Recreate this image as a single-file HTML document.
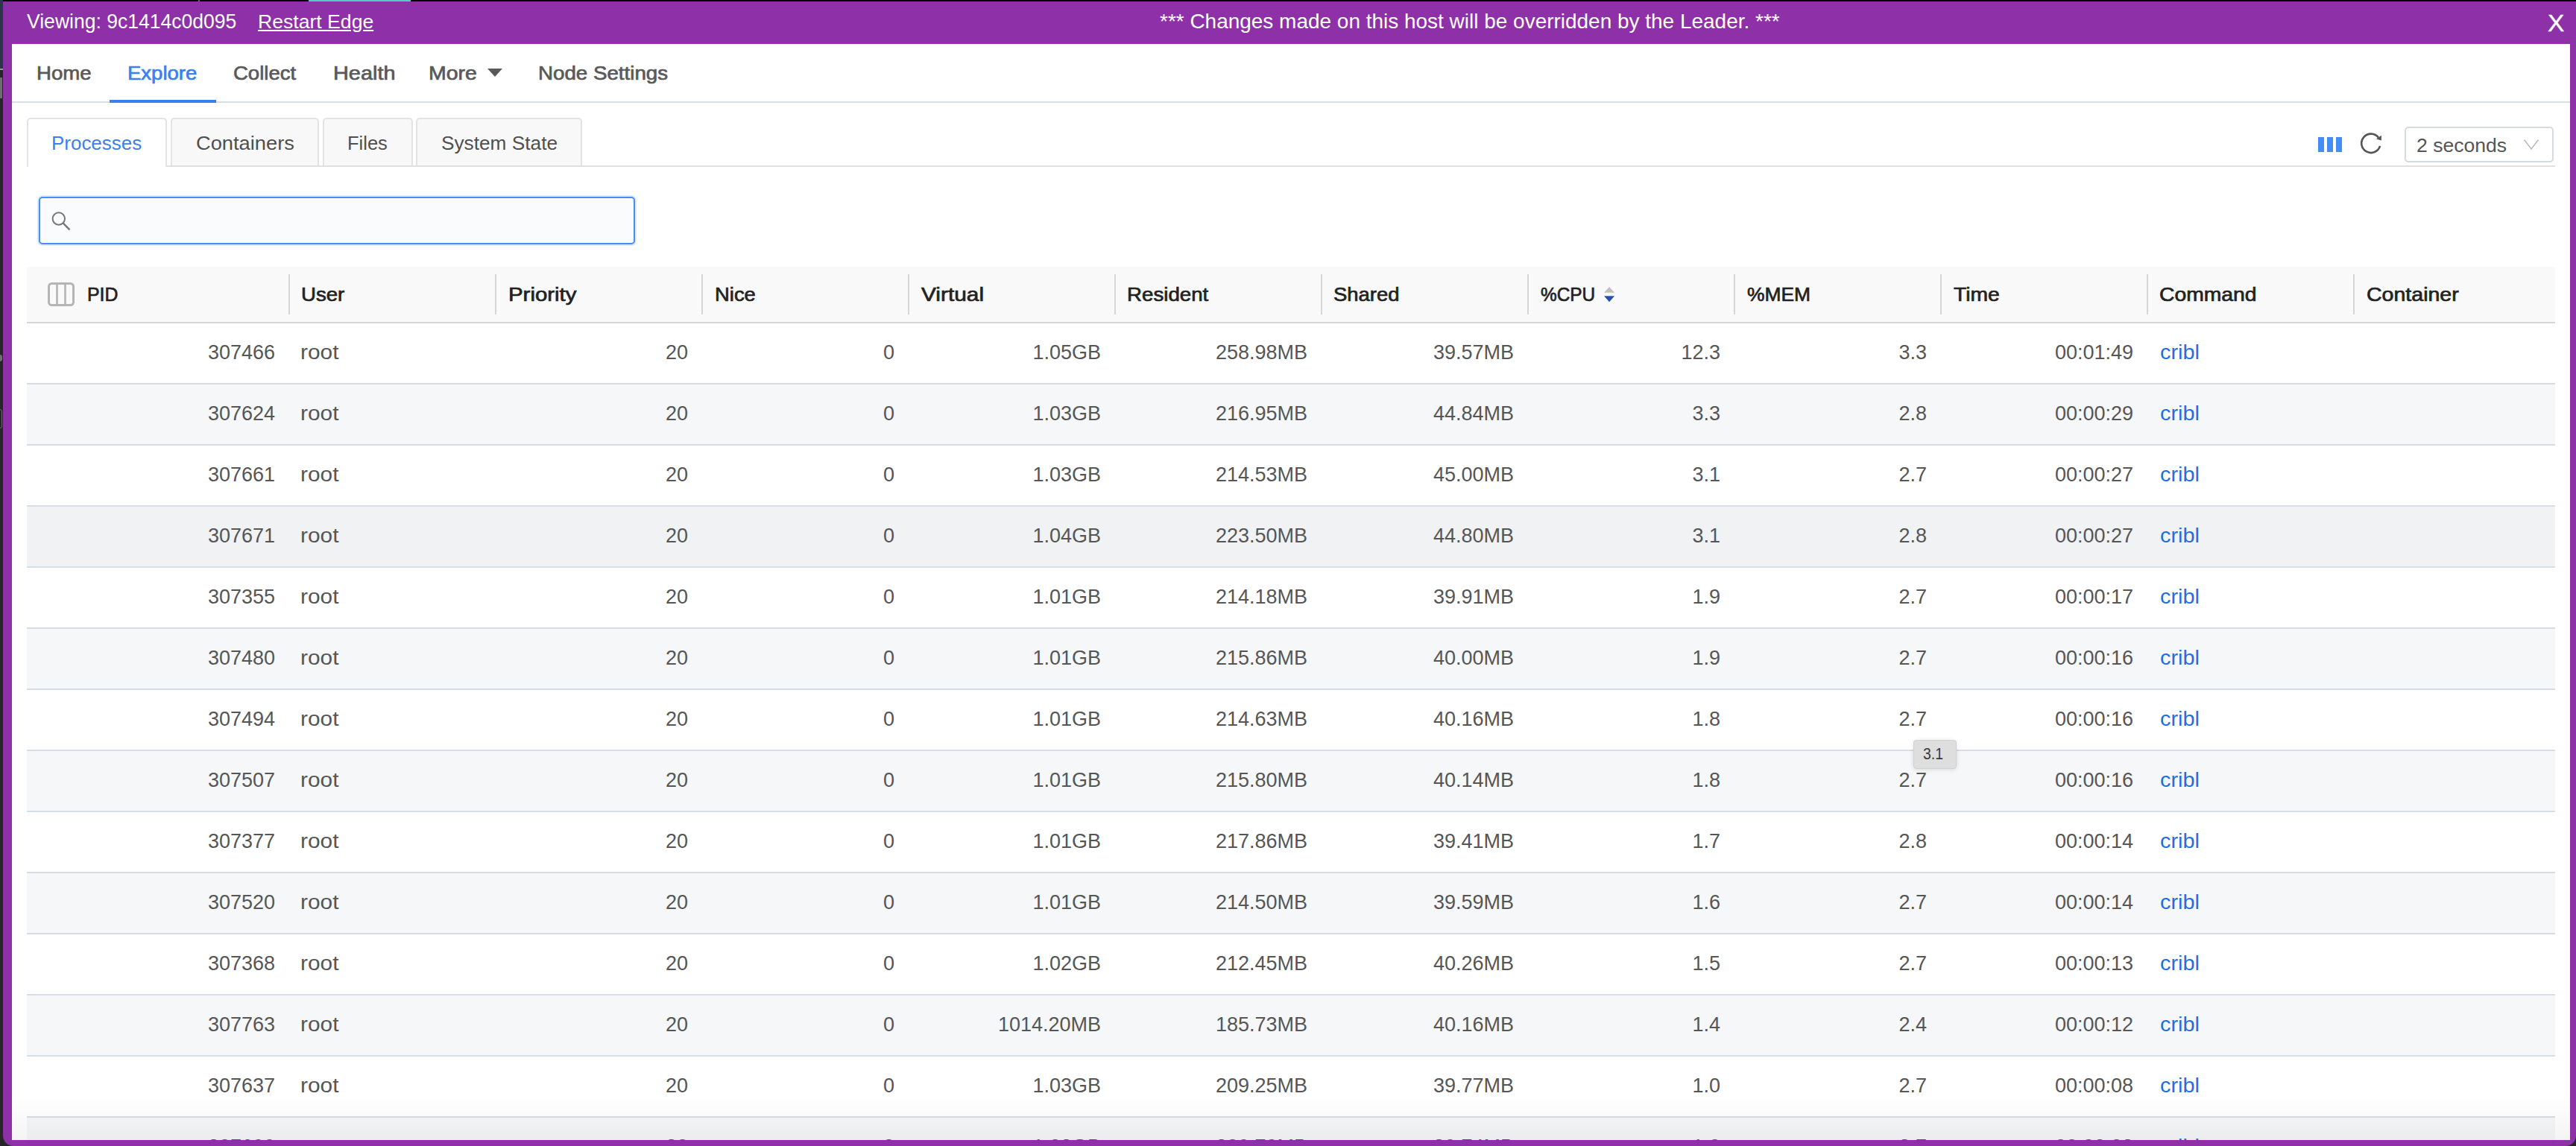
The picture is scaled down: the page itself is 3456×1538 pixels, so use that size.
<!DOCTYPE html><html><head><meta charset="utf-8"><style>
*{box-sizing:border-box;margin:0;padding:0}
html,body{width:3456px;height:1538px;overflow:hidden;background:#262626;font-family:"Liberation Sans",sans-serif}
div,span{position:absolute}
.t{white-space:pre;line-height:1;transform-origin:0 0}
.bt{color:#fff}
.nav{color:#595959}
.tab{border:2px solid #e3e3e3;border-bottom:none;border-radius:5px 5px 0 0;background:#f8f8f8}
.tabt{color:#4f4f4f}
.th{color:#222}
.sep{width:2px;height:54px;background:#d6d6d6}
.row{width:3392px;height:82px;border-bottom:2px solid #d5dee6}
.c{color:#565656;font-size:27px}
.r{text-align:right}
.lk{color:#1f6fdc}
</style></head><body>
<div style="left:0;top:0;width:3456px;height:2px;background:#000"></div>
<div style="left:414px;top:0;width:137px;height:2px;background:#5bc8c8"></div>
<div style="left:266px;top:0;width:2px;height:2px;background:#666"></div>
<div style="left:0;top:0;width:4px;height:92px;background:#293548"></div>
<div style="left:0;top:92px;width:4px;height:2px;background:#999"></div>
<div style="left:0;top:104px;width:3px;height:28px;background:#6e6e6e"></div>
<div style="left:0;top:476px;width:3px;height:9px;background:#707070;border-radius:0 5px 5px 0"></div>
<div style="left:-3px;top:549px;width:6px;height:26px;border:1.5px solid #6a6a6a;border-radius:3px"></div>
<div style="left:4px;top:2px;width:3452px;height:1536px;background:#8e30a8;border-bottom-left-radius:14px;border-bottom-right-radius:14px"></div>
<span class="t bt" style="font-size:27px;left:35.90px;top:16.44px;transform:scaleX(0.9829);">Viewing: 9c1414c0d095</span>
<span class="t bt" style="font-size:26px;left:345.95px;top:15.99px;transform:scaleX(1.0228);text-decoration:underline">Restart Edge</span>
<span class="t bt" style="font-size:28px;left:1556.30px;top:14.80px;transform:scaleX(0.9987);">*** Changes made on this host will be overridden by the Leader. ***</span>
<span class="t bt" style="font-size:31px;left:3418px;top:15.8px;transform:scaleX(1.08);-webkit-text-stroke:0.4px #fff">X</span>
<div style="left:16px;top:59px;width:3432px;height:1471px;background:#fff;overflow:hidden">
<div style="left:0;top:77px;width:3432px;height:2px;background:#d6dee4"></div>
<div style="left:131px;top:75px;width:143px;height:4px;background:#3a80f0"></div>
<span class="t nav" style="font-size:26px;-webkit-text-stroke:0.7px currentColor;left:32.74px;top:25.99px;transform:scaleX(1.0618);">Home</span>
<span class="t nav" style="font-size:26px;-webkit-text-stroke:0.7px currentColor;left:155.34px;top:25.99px;transform:scaleX(1.0575);color:#3a80f0">Explore</span>
<span class="t nav" style="font-size:26px;-webkit-text-stroke:0.7px currentColor;left:297.34px;top:25.99px;transform:scaleX(1.0582);">Collect</span>
<span class="t nav" style="font-size:26px;-webkit-text-stroke:0.7px currentColor;left:430.79px;top:25.99px;transform:scaleX(1.1110);">Health</span>
<span class="t nav" style="font-size:26px;-webkit-text-stroke:0.7px currentColor;left:558.50px;top:25.99px;transform:scaleX(1.0966);">More</span>
<span class="t nav" style="font-size:26px;-webkit-text-stroke:0.7px currentColor;left:706.43px;top:25.99px;transform:scaleX(1.0660);">Node Settings</span>
<div style="left:638px;top:33px;width:0;height:0;border-left:10px solid transparent;border-right:10px solid transparent;border-top:11px solid #595959"></div>
<div style="left:20px;top:163px;width:3392px;height:2px;background:#e0e0e0"></div>
<div class="tab" style="left:20px;top:99px;width:188px;height:66px;background:#fff"></div>
<span class="t " style="font-size:26px;left:53.20px;top:119.89px;transform:scaleX(0.9983);color:#3a80f0">Processes</span>
<div class="tab" style="left:213px;top:99px;width:199px;height:64px"></div>
<span class="t tabt" style="font-size:26px;left:246.75px;top:119.89px;transform:scaleX(1.0492);">Containers</span>
<div class="tab" style="left:417px;top:99px;width:121px;height:64px"></div>
<span class="t tabt" style="font-size:26px;left:450.34px;top:119.89px;transform:scaleX(0.9808);">Files</span>
<div class="tab" style="left:542px;top:99px;width:223px;height:64px"></div>
<span class="t tabt" style="font-size:26px;left:575.99px;top:119.89px;transform:scaleX(1.0092);">System State</span>
<div style="left:3094px;top:125px;width:8px;height:20px;background:#448df4"></div>
<div style="left:3106px;top:125px;width:8px;height:20px;background:#448df4"></div>
<div style="left:3118px;top:125px;width:8px;height:20px;background:#448df4"></div>
<svg style="position:absolute;left:3144px;top:111px" width="50" height="45" viewBox="0 0 50 45"><path d="M33.08 25.92A12.7 12.7 0 1 1 31.0 14.6" stroke="#555" stroke-width="2.6" fill="none"/><path d="M34.9 11.8L34.9 18.4L28.0 16.6Z" fill="#555"/></svg>
<div style="left:3210px;top:111px;width:200px;height:48px;border:2px solid #d3dbe1;border-radius:5px;background:#fff"></div>
<span class="t " style="font-size:26px;left:3225.58px;top:122.99px;transform:scaleX(1.0222);color:#555">2 seconds</span>
<svg style="position:absolute;left:3369px;top:127px" width="22" height="16" viewBox="0 0 22 16"><path d="M1.5 1.5L11 14L20.5 1.5" stroke="#bbb" stroke-width="1.6" fill="none"/></svg>
<div style="left:34px;top:203px;width:804px;height:68px;border-radius:7px;background:#dde8fb"></div>
<div style="left:36px;top:205px;width:800px;height:64px;border:2px solid #4390f2;border-radius:5px;background:#fafbfc"></div>
<svg style="position:absolute;left:50px;top:221.5px" width="32" height="32" viewBox="0 0 32 32"><circle cx="12.8" cy="12.5" r="8.2" stroke="#777" stroke-width="2" fill="none"/><path d="M18.6 18.4L27.5 27.3" stroke="#777" stroke-width="2.4"/></svg>
<div style="left:20px;top:299px;width:3392px;height:76px;background:#f9f9f9;border-bottom:2px solid #d5d5d5"></div>
<span class="t th" style="font-size:26px;-webkit-text-stroke:0.7px currentColor;left:100.75px;top:323.19px;transform:scaleX(0.9548);">PID</span>
<div class="sep" style="left:371px;top:309px"></div>
<span class="t th" style="font-size:26px;-webkit-text-stroke:0.7px currentColor;left:388.14px;top:323.19px;transform:scaleX(1.0611);">User</span>
<div class="sep" style="left:648px;top:309px"></div>
<span class="t th" style="font-size:26px;-webkit-text-stroke:0.7px currentColor;left:665.67px;top:323.19px;transform:scaleX(1.1309);">Priority</span>
<div class="sep" style="left:925px;top:309px"></div>
<span class="t th" style="font-size:26px;-webkit-text-stroke:0.7px currentColor;left:942.55px;top:323.19px;transform:scaleX(1.0549);">Nice</span>
<div class="sep" style="left:1202px;top:309px"></div>
<span class="t th" style="font-size:26px;-webkit-text-stroke:0.7px currentColor;left:1219.70px;top:323.19px;transform:scaleX(1.1472);">Virtual</span>
<div class="sep" style="left:1479px;top:309px"></div>
<span class="t th" style="font-size:26px;-webkit-text-stroke:0.7px currentColor;left:1496.34px;top:323.19px;transform:scaleX(1.0647);">Resident</span>
<div class="sep" style="left:1756px;top:309px"></div>
<span class="t th" style="font-size:26px;-webkit-text-stroke:0.7px currentColor;left:1773.14px;top:323.19px;transform:scaleX(1.0561);">Shared</span>
<div class="sep" style="left:2033px;top:309px"></div>
<span class="t th" style="font-size:26px;-webkit-text-stroke:0.7px currentColor;left:2051.40px;top:323.19px;transform:scaleX(0.9377);">%CPU</span>
<div class="sep" style="left:2310px;top:309px"></div>
<span class="t th" style="font-size:26px;-webkit-text-stroke:0.7px currentColor;left:2328.10px;top:323.19px;transform:scaleX(1.0146);">%MEM</span>
<div class="sep" style="left:2587px;top:309px"></div>
<span class="t th" style="font-size:26px;-webkit-text-stroke:0.7px currentColor;left:2605.30px;top:323.19px;transform:scaleX(1.0875);">Time</span>
<div class="sep" style="left:2864px;top:309px"></div>
<span class="t th" style="font-size:26px;-webkit-text-stroke:0.7px currentColor;left:2881.41px;top:323.19px;transform:scaleX(1.0890);">Command</span>
<div class="sep" style="left:3141px;top:309px"></div>
<span class="t th" style="font-size:26px;-webkit-text-stroke:0.7px currentColor;left:3158.80px;top:323.19px;transform:scaleX(1.0973);">Container</span>
<svg style="position:absolute;left:47px;top:319px" width="38" height="34" viewBox="0 0 38 34"><rect x="2.5" y="2.5" width="33" height="29" rx="4" stroke="#b5b5b5" stroke-width="3" fill="none"/><path d="M13.5 3V31M24.5 3V31" stroke="#b5b5b5" stroke-width="2.6"/></svg>
<svg style="position:absolute;left:2135px;top:326px" width="16" height="21" viewBox="0 0 16 21"><path d="M1 7.7L8 0.0L15 7.7Z" fill="#c0c0c0"/><path d="M1 12.2L15 12.2L8 20.3Z" fill="#2450b4"/></svg>
<div class="row" style="left:20px;top:375px;background:#fff"></div>
<span class="t c r" style="right:3079px;top:400.7px">307466</span>
<span class="t c" style="font-size:27px;left:386.99px;top:400.74px;transform:scaleX(1.1067);">root</span>
<span class="t c r" style="right:2525px;top:400.7px">20</span>
<span class="t c r" style="right:2248px;top:400.7px">0</span>
<span class="t c r" style="right:1971px;top:400.7px">1.05GB</span>
<span class="t c r" style="right:1694px;top:400.7px">258.98MB</span>
<span class="t c r" style="right:1417px;top:400.7px">39.57MB</span>
<span class="t c r" style="right:1140px;top:400.7px">12.3</span>
<span class="t c r" style="right:863px;top:400.7px">3.3</span>
<span class="t c r" style="right:586px;top:400.7px">00:01:49</span>
<span class="t c" style="font-size:27px;left:2881.73px;top:400.74px;transform:scaleX(1.0681);color:#1f6fdc">cribl</span>
<div class="row" style="left:20px;top:457px;background:#f5f7f9"></div>
<span class="t c r" style="right:3079px;top:482.7px">307624</span>
<span class="t c" style="font-size:27px;left:386.99px;top:482.74px;transform:scaleX(1.1067);">root</span>
<span class="t c r" style="right:2525px;top:482.7px">20</span>
<span class="t c r" style="right:2248px;top:482.7px">0</span>
<span class="t c r" style="right:1971px;top:482.7px">1.03GB</span>
<span class="t c r" style="right:1694px;top:482.7px">216.95MB</span>
<span class="t c r" style="right:1417px;top:482.7px">44.84MB</span>
<span class="t c r" style="right:1140px;top:482.7px">3.3</span>
<span class="t c r" style="right:863px;top:482.7px">2.8</span>
<span class="t c r" style="right:586px;top:482.7px">00:00:29</span>
<span class="t c" style="font-size:27px;left:2881.73px;top:482.74px;transform:scaleX(1.0681);color:#1f6fdc">cribl</span>
<div class="row" style="left:20px;top:539px;background:#fff"></div>
<span class="t c r" style="right:3079px;top:564.7px">307661</span>
<span class="t c" style="font-size:27px;left:386.99px;top:564.74px;transform:scaleX(1.1067);">root</span>
<span class="t c r" style="right:2525px;top:564.7px">20</span>
<span class="t c r" style="right:2248px;top:564.7px">0</span>
<span class="t c r" style="right:1971px;top:564.7px">1.03GB</span>
<span class="t c r" style="right:1694px;top:564.7px">214.53MB</span>
<span class="t c r" style="right:1417px;top:564.7px">45.00MB</span>
<span class="t c r" style="right:1140px;top:564.7px">3.1</span>
<span class="t c r" style="right:863px;top:564.7px">2.7</span>
<span class="t c r" style="right:586px;top:564.7px">00:00:27</span>
<span class="t c" style="font-size:27px;left:2881.73px;top:564.74px;transform:scaleX(1.0681);color:#1f6fdc">cribl</span>
<div class="row" style="left:20px;top:621px;background:#f0f2f4"></div>
<span class="t c r" style="right:3079px;top:646.7px">307671</span>
<span class="t c" style="font-size:27px;left:386.99px;top:646.74px;transform:scaleX(1.1067);">root</span>
<span class="t c r" style="right:2525px;top:646.7px">20</span>
<span class="t c r" style="right:2248px;top:646.7px">0</span>
<span class="t c r" style="right:1971px;top:646.7px">1.04GB</span>
<span class="t c r" style="right:1694px;top:646.7px">223.50MB</span>
<span class="t c r" style="right:1417px;top:646.7px">44.80MB</span>
<span class="t c r" style="right:1140px;top:646.7px">3.1</span>
<span class="t c r" style="right:863px;top:646.7px">2.8</span>
<span class="t c r" style="right:586px;top:646.7px">00:00:27</span>
<span class="t c" style="font-size:27px;left:2881.73px;top:646.74px;transform:scaleX(1.0681);color:#1f6fdc">cribl</span>
<div class="row" style="left:20px;top:703px;background:#fff"></div>
<span class="t c r" style="right:3079px;top:728.7px">307355</span>
<span class="t c" style="font-size:27px;left:386.99px;top:728.74px;transform:scaleX(1.1067);">root</span>
<span class="t c r" style="right:2525px;top:728.7px">20</span>
<span class="t c r" style="right:2248px;top:728.7px">0</span>
<span class="t c r" style="right:1971px;top:728.7px">1.01GB</span>
<span class="t c r" style="right:1694px;top:728.7px">214.18MB</span>
<span class="t c r" style="right:1417px;top:728.7px">39.91MB</span>
<span class="t c r" style="right:1140px;top:728.7px">1.9</span>
<span class="t c r" style="right:863px;top:728.7px">2.7</span>
<span class="t c r" style="right:586px;top:728.7px">00:00:17</span>
<span class="t c" style="font-size:27px;left:2881.73px;top:728.74px;transform:scaleX(1.0681);color:#1f6fdc">cribl</span>
<div class="row" style="left:20px;top:785px;background:#f5f7f9"></div>
<span class="t c r" style="right:3079px;top:810.7px">307480</span>
<span class="t c" style="font-size:27px;left:386.99px;top:810.74px;transform:scaleX(1.1067);">root</span>
<span class="t c r" style="right:2525px;top:810.7px">20</span>
<span class="t c r" style="right:2248px;top:810.7px">0</span>
<span class="t c r" style="right:1971px;top:810.7px">1.01GB</span>
<span class="t c r" style="right:1694px;top:810.7px">215.86MB</span>
<span class="t c r" style="right:1417px;top:810.7px">40.00MB</span>
<span class="t c r" style="right:1140px;top:810.7px">1.9</span>
<span class="t c r" style="right:863px;top:810.7px">2.7</span>
<span class="t c r" style="right:586px;top:810.7px">00:00:16</span>
<span class="t c" style="font-size:27px;left:2881.73px;top:810.74px;transform:scaleX(1.0681);color:#1f6fdc">cribl</span>
<div class="row" style="left:20px;top:867px;background:#fff"></div>
<span class="t c r" style="right:3079px;top:892.7px">307494</span>
<span class="t c" style="font-size:27px;left:386.99px;top:892.74px;transform:scaleX(1.1067);">root</span>
<span class="t c r" style="right:2525px;top:892.7px">20</span>
<span class="t c r" style="right:2248px;top:892.7px">0</span>
<span class="t c r" style="right:1971px;top:892.7px">1.01GB</span>
<span class="t c r" style="right:1694px;top:892.7px">214.63MB</span>
<span class="t c r" style="right:1417px;top:892.7px">40.16MB</span>
<span class="t c r" style="right:1140px;top:892.7px">1.8</span>
<span class="t c r" style="right:863px;top:892.7px">2.7</span>
<span class="t c r" style="right:586px;top:892.7px">00:00:16</span>
<span class="t c" style="font-size:27px;left:2881.73px;top:892.74px;transform:scaleX(1.0681);color:#1f6fdc">cribl</span>
<div class="row" style="left:20px;top:949px;background:#f5f7f9"></div>
<span class="t c r" style="right:3079px;top:974.7px">307507</span>
<span class="t c" style="font-size:27px;left:386.99px;top:974.74px;transform:scaleX(1.1067);">root</span>
<span class="t c r" style="right:2525px;top:974.7px">20</span>
<span class="t c r" style="right:2248px;top:974.7px">0</span>
<span class="t c r" style="right:1971px;top:974.7px">1.01GB</span>
<span class="t c r" style="right:1694px;top:974.7px">215.80MB</span>
<span class="t c r" style="right:1417px;top:974.7px">40.14MB</span>
<span class="t c r" style="right:1140px;top:974.7px">1.8</span>
<span class="t c r" style="right:863px;top:974.7px">2.7</span>
<span class="t c r" style="right:586px;top:974.7px">00:00:16</span>
<span class="t c" style="font-size:27px;left:2881.73px;top:974.74px;transform:scaleX(1.0681);color:#1f6fdc">cribl</span>
<div class="row" style="left:20px;top:1031px;background:#fff"></div>
<span class="t c r" style="right:3079px;top:1056.7px">307377</span>
<span class="t c" style="font-size:27px;left:386.99px;top:1056.74px;transform:scaleX(1.1067);">root</span>
<span class="t c r" style="right:2525px;top:1056.7px">20</span>
<span class="t c r" style="right:2248px;top:1056.7px">0</span>
<span class="t c r" style="right:1971px;top:1056.7px">1.01GB</span>
<span class="t c r" style="right:1694px;top:1056.7px">217.86MB</span>
<span class="t c r" style="right:1417px;top:1056.7px">39.41MB</span>
<span class="t c r" style="right:1140px;top:1056.7px">1.7</span>
<span class="t c r" style="right:863px;top:1056.7px">2.8</span>
<span class="t c r" style="right:586px;top:1056.7px">00:00:14</span>
<span class="t c" style="font-size:27px;left:2881.73px;top:1056.74px;transform:scaleX(1.0681);color:#1f6fdc">cribl</span>
<div class="row" style="left:20px;top:1113px;background:#f5f7f9"></div>
<span class="t c r" style="right:3079px;top:1138.7px">307520</span>
<span class="t c" style="font-size:27px;left:386.99px;top:1138.74px;transform:scaleX(1.1067);">root</span>
<span class="t c r" style="right:2525px;top:1138.7px">20</span>
<span class="t c r" style="right:2248px;top:1138.7px">0</span>
<span class="t c r" style="right:1971px;top:1138.7px">1.01GB</span>
<span class="t c r" style="right:1694px;top:1138.7px">214.50MB</span>
<span class="t c r" style="right:1417px;top:1138.7px">39.59MB</span>
<span class="t c r" style="right:1140px;top:1138.7px">1.6</span>
<span class="t c r" style="right:863px;top:1138.7px">2.7</span>
<span class="t c r" style="right:586px;top:1138.7px">00:00:14</span>
<span class="t c" style="font-size:27px;left:2881.73px;top:1138.74px;transform:scaleX(1.0681);color:#1f6fdc">cribl</span>
<div class="row" style="left:20px;top:1195px;background:#fff"></div>
<span class="t c r" style="right:3079px;top:1220.7px">307368</span>
<span class="t c" style="font-size:27px;left:386.99px;top:1220.74px;transform:scaleX(1.1067);">root</span>
<span class="t c r" style="right:2525px;top:1220.7px">20</span>
<span class="t c r" style="right:2248px;top:1220.7px">0</span>
<span class="t c r" style="right:1971px;top:1220.7px">1.02GB</span>
<span class="t c r" style="right:1694px;top:1220.7px">212.45MB</span>
<span class="t c r" style="right:1417px;top:1220.7px">40.26MB</span>
<span class="t c r" style="right:1140px;top:1220.7px">1.5</span>
<span class="t c r" style="right:863px;top:1220.7px">2.7</span>
<span class="t c r" style="right:586px;top:1220.7px">00:00:13</span>
<span class="t c" style="font-size:27px;left:2881.73px;top:1220.74px;transform:scaleX(1.0681);color:#1f6fdc">cribl</span>
<div class="row" style="left:20px;top:1277px;background:#f5f7f9"></div>
<span class="t c r" style="right:3079px;top:1302.7px">307763</span>
<span class="t c" style="font-size:27px;left:386.99px;top:1302.74px;transform:scaleX(1.1067);">root</span>
<span class="t c r" style="right:2525px;top:1302.7px">20</span>
<span class="t c r" style="right:2248px;top:1302.7px">0</span>
<span class="t c r" style="right:1971px;top:1302.7px">1014.20MB</span>
<span class="t c r" style="right:1694px;top:1302.7px">185.73MB</span>
<span class="t c r" style="right:1417px;top:1302.7px">40.16MB</span>
<span class="t c r" style="right:1140px;top:1302.7px">1.4</span>
<span class="t c r" style="right:863px;top:1302.7px">2.4</span>
<span class="t c r" style="right:586px;top:1302.7px">00:00:12</span>
<span class="t c" style="font-size:27px;left:2881.73px;top:1302.74px;transform:scaleX(1.0681);color:#1f6fdc">cribl</span>
<div class="row" style="left:20px;top:1359px;background:#fff"></div>
<span class="t c r" style="right:3079px;top:1384.7px">307637</span>
<span class="t c" style="font-size:27px;left:386.99px;top:1384.74px;transform:scaleX(1.1067);">root</span>
<span class="t c r" style="right:2525px;top:1384.7px">20</span>
<span class="t c r" style="right:2248px;top:1384.7px">0</span>
<span class="t c r" style="right:1971px;top:1384.7px">1.03GB</span>
<span class="t c r" style="right:1694px;top:1384.7px">209.25MB</span>
<span class="t c r" style="right:1417px;top:1384.7px">39.77MB</span>
<span class="t c r" style="right:1140px;top:1384.7px">1.0</span>
<span class="t c r" style="right:863px;top:1384.7px">2.7</span>
<span class="t c r" style="right:586px;top:1384.7px">00:00:08</span>
<span class="t c" style="font-size:27px;left:2881.73px;top:1384.74px;transform:scaleX(1.0681);color:#1f6fdc">cribl</span>
<div class="row" style="left:20px;top:1441px;background:#f5f7f9"></div>
<span class="t c r" style="right:3079px;top:1466.7px">307699</span>
<span class="t c" style="font-size:27px;left:386.99px;top:1466.74px;transform:scaleX(1.1067);">root</span>
<span class="t c r" style="right:2525px;top:1466.7px">20</span>
<span class="t c r" style="right:2248px;top:1466.7px">0</span>
<span class="t c r" style="right:1971px;top:1466.7px">1.03GB</span>
<span class="t c r" style="right:1694px;top:1466.7px">209.70MB</span>
<span class="t c r" style="right:1417px;top:1466.7px">39.74MB</span>
<span class="t c r" style="right:1140px;top:1466.7px">1.0</span>
<span class="t c r" style="right:863px;top:1466.7px">2.7</span>
<span class="t c r" style="right:586px;top:1466.7px">00:00:08</span>
<span class="t c" style="font-size:27px;left:2881.73px;top:1466.74px;transform:scaleX(1.0681);color:#1f6fdc">cribl</span>
<div style="left:2551px;top:934px;width:57.5px;height:39px;background:#dedede;border:1px solid #d2d2d2;border-radius:4px;box-shadow:0 1px 6px rgba(0,0,0,.12)"></div>
<span class="t " style="font-size:22px;left:2564.41px;top:942.48px;transform:scaleX(0.8862);color:#3a3a3a">3.1</span>
<div style="left:0;top:1411px;width:3432px;height:60px;background:linear-gradient(rgba(0,0,0,0),rgba(0,0,0,0.045))"></div>
</div>
</body></html>
